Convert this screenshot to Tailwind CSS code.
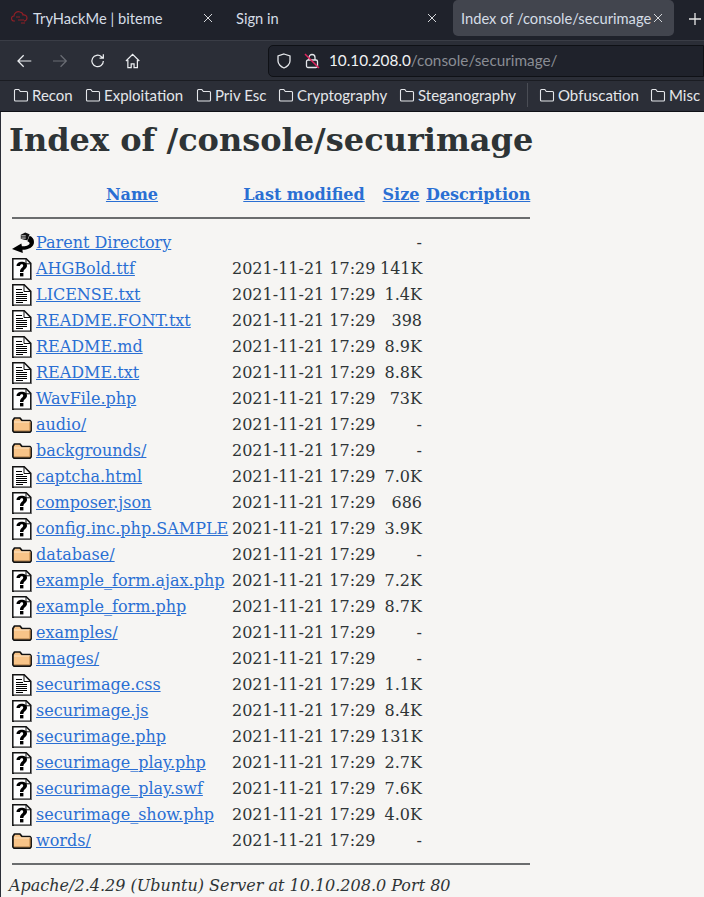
<!DOCTYPE html>
<html lang="en">
<head>
<meta charset="UTF-8">
<title>Index of /console/securimage</title>
<script src="https://cdn.jsdelivr.net/npm/@tailwindcss/browser@4"></script>
</head>
<body class="w-[704px] h-[897px] overflow-hidden bg-[#f6f5f3] font-['DejaVu_Serif',serif] text-[#2e3436]">
<svg class="hidden" width="0" height="0">
  <symbol id="i-unknown" viewBox="0 0 20 22">
    <path d="M.8.8h13.400l4.600 4.600v15.800H.8z" fill="#fff" stroke="#111" stroke-width="1.500"/>
    <path d="M19.500 6v15.800H2" fill="none" stroke="#777"/>
    <path d="M14 1v4.800h4.800" fill="none" stroke="#111"/>
    <path d="M4.500 8C4.500 2.500 15 2.500 15 7.500c0 3.500-3.600 3.500-3.600 6.500H8c0-4.500 3.200-4 3.200-6.500 0-1.800-3.200-1.800-3.200.5z" fill="#000"/>
    <rect x="8" y="15" width="3.400" height="3.400" fill="#000"/>
  </symbol>
  <symbol id="i-text" viewBox="0 0 20 22">
    <path d="M.8.8h11.400l6.600 6.600v13.800H.8z" fill="#fff" stroke="#111" stroke-width="1.500"/>
    <path d="M19.500 8v13.800H2" fill="none" stroke="#777"/>
    <path d="M12 1v6.500h6.500" fill="none" stroke="#111"/>
    <path d="M4 5.500h6M4 8.500h7M4 10.500h11M4 12.500h11M4 14.500h11M4 16.500h11M4 18.500h7" stroke="#000" stroke-width="1.100"/>
  </symbol>
  <symbol id="i-folder" viewBox="0 0 20 16">
    <path d="M.9 3.500 2.500 1h5.500l2 2.500h8l1.100 1.500v9l-1.100 1.100H2L.9 14z" fill="#f8c488" stroke="#111" stroke-width="1.700" stroke-linejoin="round"/>
    <path d="M2 5h16.500" stroke="#fde3c2"/>
    <path d="M2.500 13.800h15.500" stroke="#7a4f22" stroke-dasharray="1 1"/>
    <path d="M18 5v8.500" stroke="#b57a3a"/>
  </symbol>
  <symbol id="i-back" viewBox="0 0 20 20">
    <path d="M0 15.500 8.500 10.500l.5 2.500c3.500 0 6.500-.5 7-2.500.2-1-.8-1.800-2-2.200l2-4.800c2.500 1 4 3 4 5.500 0 4.500-4.500 7-10.500 7.200l.3 2.800z" fill="#000"/>
    <path d="M8 2.500 12 .5l4 1.500-2 5.500-3-.5-3-.8z" fill="#111"/>
    <path d="M8.500 3.500h4M8.500 5.500h4" stroke="#fff" stroke-width=".8"/>
  </symbol>
  <symbol id="i-bm" viewBox="0 0 16 16">
    <path d="M1.500 13V3.500a1 1 0 0 1 1-1h3.300l1.500 2h6.200a1 1 0 0 1 1 1V13a1 1 0 0 1-1 1h-11a1 1 0 0 1-1-1z" fill="none" stroke="#e4e6ea" stroke-width="1.100"/>
  </symbol>
</svg>

<div class="bg-[#1f222b] font-['Lato',sans-serif] text-[14.700px] text-[#d5dde6]">
  <div class="h-[40px] flex items-start">
    <div class="w-[224px] h-[36px] flex items-center pl-[11px] shrink-0">
      <svg width="18" height="18" viewBox="0 0 18 18" fill="none" stroke="#8f1f26" stroke-width="1.200" class="mr-[4px]"><path d="M4 12H3a2.500 2.500 0 0 1 0-5c0-3 3-5 6-4 2 .5 3 2 3 3 2-.5 4 1 4 3s-2 3-3 3"/><path d="M5 8h4M7 11h6M10 14h4"/></svg>
      <span class="flex-1 whitespace-nowrap">TryHackMe | biteme</span>
      <svg width="10" height="10" viewBox="0 0 10 10" stroke="#d5d7db" class="mr-[11px]"><path d="M1 1l8 8M9 1l-8 8"/></svg>
    </div>
    <div class="w-[229px] h-[36px] flex items-center pl-[12px] shrink-0">
      <span class="flex-1 whitespace-nowrap">Sign in</span>
      <svg width="10" height="10" viewBox="0 0 10 10" stroke="#d5d7db" class="mr-[16px]"><path d="M1 1l8 8M9 1l-8 8"/></svg>
    </div>
    <div class="w-[221px] h-[36px] flex items-center pl-[8px] bg-[#42454e] rounded-[5px] shrink-0">
      <span class="flex-1 whitespace-nowrap">Index of /console/securimage</span>
      <svg width="10" height="10" viewBox="0 0 10 10" stroke="#d5d7db" class="mr-[11px]"><path d="M1 1l8 8M9 1l-8 8"/></svg>
    </div>
    <svg width="14" height="14" viewBox="0 0 14 14" stroke="#e8e8e8" stroke-width="1.300" class="ml-[14px] mt-[12px] shrink-0"><path d="M7 1v12M1 7h12"/></svg>
  </div>
  <div class="h-[72px] bg-[#2b2e37] border-t border-t-[#3a3d46] border-b border-b-[#0f1116]">
    <div class="h-[40px] flex items-center border-b border-b-[#1a1c22]">
      <svg width="16" height="14" viewBox="0 0 16 14" fill="none" stroke="#eceef1" stroke-width="1.300" class="ml-[17px]"><path d="M15 7H1M7 1L1 7l6 6"/></svg>
      <svg width="16" height="14" viewBox="0 0 16 14" fill="none" stroke="#6a6d74" stroke-width="1.300" class="ml-[20px]"><path d="M1 7h14M9 1l6 6-6 6"/></svg>
      <svg width="16" height="16" viewBox="0 0 16 16" fill="none" stroke="#eceef1" stroke-width="1.300" class="ml-[22px]"><path d="M14 8a6 6 0 1 1-2-4.500L14 5M14 1v4h-4"/></svg>
      <svg width="16" height="16" viewBox="0 0 16 16" fill="none" stroke="#eceef1" stroke-width="1.300" class="ml-[20px]"><path d="M1 8l7-7 7 7M3 7v8h3.500v-4h3v4H13V7"/></svg>
      <div class="ml-[128px] w-[436px] h-[32px] bg-[#1f222b] border border-[#0f1116] rounded-l-[5px] flex items-center shrink-0">
        <svg width="16" height="16" viewBox="0 0 16 16" fill="none" stroke="#e4e6ea" stroke-width="1.300" class="ml-[7px]"><path d="M8 1l6 2v5c0 3-3 6-6 7-3-1-6-4-6-7V3z"/></svg>
        <svg width="16" height="16" viewBox="0 0 16 16" fill="none" class="ml-[12px]"><rect x="2.500" y="7" width="11" height="7.500" rx="1.500" stroke="#e4e6ea" stroke-width="1.300"/><path d="M5 7V4.500a3 3 0 0 1 6 0V7" stroke="#e4e6ea" stroke-width="1.300"/><path d="M1 1l14 14" stroke="#e0245e" stroke-width="1.500"/></svg>
        <span class="ml-[9px] text-[15.300px] text-[#f1f2f4] whitespace-nowrap">10.10.208.0<span class="text-[#8a8d94]">/console/securimage/</span></span>
      </div>
    </div>
    <div class="h-[28px] flex items-center text-[15px] text-[#e4e6ea] whitespace-nowrap">
      <svg width="16" height="16" class="ml-[13px] mr-[3px]"><use href="#i-bm"/></svg><span class="w-[53px]">Recon</span>
      <svg width="16" height="16" class="mr-[3px]"><use href="#i-bm"/></svg><span class="w-[92px]">Exploitation</span>
      <svg width="16" height="16" class="mr-[3px]"><use href="#i-bm"/></svg><span class="w-[63px]">Priv Esc</span>
      <svg width="16" height="16" class="mr-[3px]"><use href="#i-bm"/></svg><span class="w-[102px]">Cryptography</span>
      <svg width="16" height="16" class="mr-[3px]"><use href="#i-bm"/></svg><span class="w-[109px]">Steganography</span>
      <div class="mr-[11px] w-px h-[24px] bg-[#4a4d55]"></div>
      <svg width="16" height="16" class="mr-[3px]"><use href="#i-bm"/></svg><span class="w-[92px]">Obfuscation</span>
      <svg width="16" height="16" class="mr-[3px]"><use href="#i-bm"/></svg><span>Misc</span>
    </div>
  </div>
</div>

<div class="border-l border-l-[#2b2e37] pl-[8px]">
  <h1 class="text-[32px] font-bold leading-[38px] pt-[9px] box-content">Index of /console/securimage</h1>
  <table class="mt-[23px] ml-[3px] table-fixed w-[518px] border-separate border-spacing-0 text-[16px] leading-[26px] [&_a]:text-[#2a6fd3] [&_a]:underline">
    <thead>
      <tr class="h-[26px] font-bold">
        <th class="w-[24px]"></th>
        <th class="w-[196px] pr-[4px]"><a href="#">Name</a></th>
        <th class="w-[148px] pr-[4px]"><a href="#">Last modified</a></th>
        <th class="w-[46px] pr-[4px]"><a href="#">Size</a></th>
        <th class="w-[104px]"><a href="#">Description</a></th>
      </tr>
      <tr><th colspan="5" class="pt-[9px] pb-[11px]"><div class="h-[2px] bg-[#6b6d6e]"></div></th></tr>
    </thead>
    <tbody>
      <tr><td><svg width="22" height="22" class="block"><use href="#i-back"/></svg></td><td><a href="#">Parent Directory</a></td><td></td><td class="text-right pr-[4px]">-</td><td></td></tr>
      <tr><td><svg width="20" height="22" class="block"><use href="#i-unknown"/></svg></td><td><a href="#">AHGBold.ttf</a></td><td>2021-11-21 17:29</td><td class="text-right pr-[4px]">141K</td><td></td></tr>
      <tr><td><svg width="20" height="22" class="block"><use href="#i-text"/></svg></td><td><a href="#">LICENSE.txt</a></td><td>2021-11-21 17:29</td><td class="text-right pr-[4px]">1.4K</td><td></td></tr>
      <tr><td><svg width="20" height="22" class="block"><use href="#i-text"/></svg></td><td><a href="#">README.FONT.txt</a></td><td>2021-11-21 17:29</td><td class="text-right pr-[4px]">398</td><td></td></tr>
      <tr><td><svg width="20" height="22" class="block"><use href="#i-text"/></svg></td><td><a href="#">README.md</a></td><td>2021-11-21 17:29</td><td class="text-right pr-[4px]">8.9K</td><td></td></tr>
      <tr><td><svg width="20" height="22" class="block"><use href="#i-text"/></svg></td><td><a href="#">README.txt</a></td><td>2021-11-21 17:29</td><td class="text-right pr-[4px]">8.8K</td><td></td></tr>
      <tr><td><svg width="20" height="22" class="block"><use href="#i-unknown"/></svg></td><td><a href="#">WavFile.php</a></td><td>2021-11-21 17:29</td><td class="text-right pr-[4px]">73K</td><td></td></tr>
      <tr><td><svg width="20" height="16" class="block"><use href="#i-folder"/></svg></td><td><a href="#">audio/</a></td><td>2021-11-21 17:29</td><td class="text-right pr-[4px]">-</td><td></td></tr>
      <tr><td><svg width="20" height="16" class="block"><use href="#i-folder"/></svg></td><td><a href="#">backgrounds/</a></td><td>2021-11-21 17:29</td><td class="text-right pr-[4px]">-</td><td></td></tr>
      <tr><td><svg width="20" height="22" class="block"><use href="#i-text"/></svg></td><td><a href="#">captcha.html</a></td><td>2021-11-21 17:29</td><td class="text-right pr-[4px]">7.0K</td><td></td></tr>
      <tr><td><svg width="20" height="22" class="block"><use href="#i-unknown"/></svg></td><td><a href="#">composer.json</a></td><td>2021-11-21 17:29</td><td class="text-right pr-[4px]">686</td><td></td></tr>
      <tr><td><svg width="20" height="22" class="block"><use href="#i-unknown"/></svg></td><td><a href="#">config.inc.php.SAMPLE</a></td><td>2021-11-21 17:29</td><td class="text-right pr-[4px]">3.9K</td><td></td></tr>
      <tr><td><svg width="20" height="16" class="block"><use href="#i-folder"/></svg></td><td><a href="#">database/</a></td><td>2021-11-21 17:29</td><td class="text-right pr-[4px]">-</td><td></td></tr>
      <tr><td><svg width="20" height="22" class="block"><use href="#i-unknown"/></svg></td><td><a href="#">example_form.ajax.php</a></td><td>2021-11-21 17:29</td><td class="text-right pr-[4px]">7.2K</td><td></td></tr>
      <tr><td><svg width="20" height="22" class="block"><use href="#i-unknown"/></svg></td><td><a href="#">example_form.php</a></td><td>2021-11-21 17:29</td><td class="text-right pr-[4px]">8.7K</td><td></td></tr>
      <tr><td><svg width="20" height="16" class="block"><use href="#i-folder"/></svg></td><td><a href="#">examples/</a></td><td>2021-11-21 17:29</td><td class="text-right pr-[4px]">-</td><td></td></tr>
      <tr><td><svg width="20" height="16" class="block"><use href="#i-folder"/></svg></td><td><a href="#">images/</a></td><td>2021-11-21 17:29</td><td class="text-right pr-[4px]">-</td><td></td></tr>
      <tr><td><svg width="20" height="22" class="block"><use href="#i-text"/></svg></td><td><a href="#">securimage.css</a></td><td>2021-11-21 17:29</td><td class="text-right pr-[4px]">1.1K</td><td></td></tr>
      <tr><td><svg width="20" height="22" class="block"><use href="#i-unknown"/></svg></td><td><a href="#">securimage.js</a></td><td>2021-11-21 17:29</td><td class="text-right pr-[4px]">8.4K</td><td></td></tr>
      <tr><td><svg width="20" height="22" class="block"><use href="#i-unknown"/></svg></td><td><a href="#">securimage.php</a></td><td>2021-11-21 17:29</td><td class="text-right pr-[4px]">131K</td><td></td></tr>
      <tr><td><svg width="20" height="22" class="block"><use href="#i-unknown"/></svg></td><td><a href="#">securimage_play.php</a></td><td>2021-11-21 17:29</td><td class="text-right pr-[4px]">2.7K</td><td></td></tr>
      <tr><td><svg width="20" height="22" class="block"><use href="#i-unknown"/></svg></td><td><a href="#">securimage_play.swf</a></td><td>2021-11-21 17:29</td><td class="text-right pr-[4px]">7.6K</td><td></td></tr>
      <tr><td><svg width="20" height="22" class="block"><use href="#i-unknown"/></svg></td><td><a href="#">securimage_show.php</a></td><td>2021-11-21 17:29</td><td class="text-right pr-[4px]">4.0K</td><td></td></tr>
      <tr><td><svg width="20" height="16" class="block"><use href="#i-folder"/></svg></td><td><a href="#">words/</a></td><td>2021-11-21 17:29</td><td class="text-right pr-[4px]">-</td><td></td></tr>
      <tr><th colspan="5" class="pt-[9px] pb-[10px]"><div class="h-[2px] bg-[#6b6d6e]"></div></th></tr>
    </tbody>
  </table>
  <address class="text-[16px] italic leading-[22px]">Apache/2.4.29 (Ubuntu) Server at 10.10.208.0 Port 80</address>
</div>
</body>
</html>
